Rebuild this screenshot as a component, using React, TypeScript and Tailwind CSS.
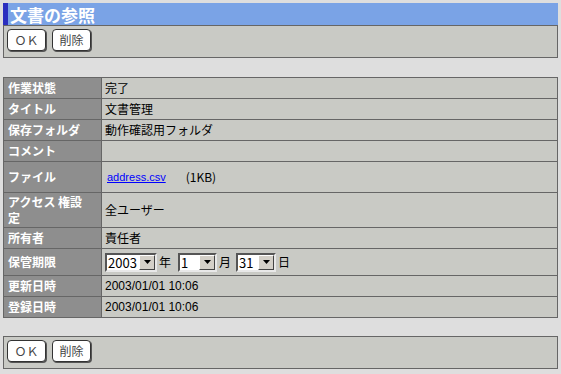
import { ReactNode } from "react";

const FONT = { fontFamily: '"MS PGothic", "Noto Sans CJK JP", "Liberation Sans", sans-serif' };

const Btn = ({ children }: { children: ReactNode }) => (
  <button className="h-[22px] w-[39px] rounded-[4px] border border-[#333] bg-white text-[12px] leading-none text-[#444] shadow-[1px_1px_0_#555]">
    {children}
  </button>
);

const ButtonBar = () => (
  <div className="flex h-[33px] gap-[6px] border border-[#666] bg-[#c9cac5] pl-[3px] pt-[3px]">
    <Btn>ＯＫ</Btn>
    <Btn>削除</Btn>
  </div>
);

const Select = ({ value, w }: { value: string; w: string }) => (
  <div className={`flex h-[19px] ${w} items-stretch border-2 border-t-[#555] border-l-[#555] border-b-[#e8e8e8] border-r-[#e8e8e8] bg-white`}>
    <span className="flex-1 pl-[1px] text-[13px] leading-[15px] text-black">{value}</span>
    <span className="flex w-[16px] items-center justify-center border border-t-white border-l-white border-b-[#444] border-r-[#444] bg-[#d4d0c8]">
      <svg width="7" height="4" viewBox="0 0 7 4">
        <path d="M0 0h7L3.5 4z" fill="#000" />
      </svg>
    </span>
  </div>
);

type Row = { label: ReactNode; value: ReactNode; h: string };

const dateCls = "text-[12px]";

const rows: Row[] = [
  { label: "作業状態", value: "完了", h: "h-[20px]" },
  { label: "タイトル", value: "文書管理", h: "h-[20px]" },
  { label: "保存フォルダ", value: "動作確認用フォルダ", h: "h-[20px]" },
  { label: "コメント", value: "", h: "h-[20px]" },
  {
    label: "ファイル",
    value: (
      <span className="flex items-center">
        <a className="ml-[2px] text-[11px] text-[#0000ff] underline" style={{ fontFamily: '"Liberation Sans", sans-serif' }}>
          address.csv
        </a>
        <span className="ml-[20px] text-[12px]">(1KB)</span>
      </span>
    ),
    h: "h-[30px]",
  },
  { label: <>アクセス 権設<br />定</>, value: "全ユーザー", h: "h-[34px]" },
  { label: "所有者", value: "責任者", h: "h-[20px]" },
  {
    label: "保管期限",
    value: (
      <span className="flex items-center gap-[2px]">
        <Select value="2003" w="w-[52px]" />
        <span className="mr-[5px]">年</span>
        <Select value="1" w="w-[39px]" />
        <span className="mr-[3px]">月</span>
        <Select value="31" w="w-[40px]" />
        <span>日</span>
      </span>
    ),
    h: "h-[26px]",
  },
  { label: "更新日時", value: <span className={dateCls} style={{ fontFamily: '"Liberation Sans", sans-serif' }}>2003/01/01 10:06</span>, h: "h-[20px]" },
  { label: "登録日時", value: <span className={dateCls} style={{ fontFamily: '"Liberation Sans", sans-serif' }}>2003/01/01 10:06</span>, h: "h-[20px]" },
];

export default function App() {
  return (
    <div className="h-[374px] w-[561px] bg-[#dedede] px-[3px] pt-[3px]" style={FONT}>
      <div className="flex h-[22px] items-center border-l-[5px] border-[#2b2fbf] bg-[#7aa3e6] pl-[2px] text-[17px] font-bold leading-none text-white">
        文書の参照
      </div>
      <ButtonBar />

      <div className="mt-[19px] grid grid-cols-[97px_1fr] gap-px border border-[#666] bg-[#666]">
        {rows.map((r, i) => (
          <div key={i} className="contents">
            <div className={`flex ${r.h} items-center bg-[#8e8e8e] pl-[4px] text-[12px] font-bold leading-[16px] text-white`}>
              <span>{r.label}</span>
            </div>
            <div className={`flex ${r.h} items-center bg-[#c9cac5] pl-[3px] text-[12px] text-black`}>
              {r.value}
            </div>
          </div>
        ))}
      </div>

      <div className="mt-[18px]">
        <ButtonBar />
      </div>
    </div>
  );
}
